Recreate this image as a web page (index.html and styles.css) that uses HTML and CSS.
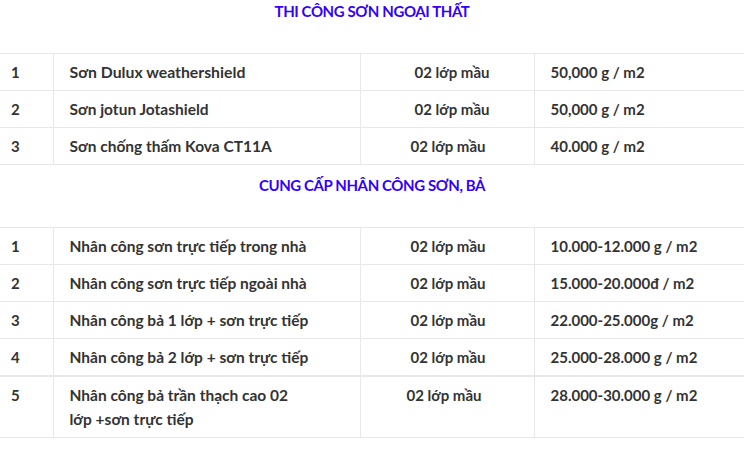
FILE: index.html
```html
<!DOCTYPE html>
<html lang="vi">
<head>
<meta charset="utf-8">
<title>Bảng giá sơn</title>
<link rel="stylesheet" href="styles.css">
</head>
<body>
<table class="price">
  <colgroup>
    <col class="w-no"><col class="w-name"><col class="w-layer"><col class="w-price">
  </colgroup>
  <tbody>
    <tr><td colspan="4" class="head head-first">THI CÔNG SƠN NGOẠI THẤT</td></tr>
    <tr>
      <td class="no">1</td>
      <td class="name big">Sơn Dulux weathershield</td>
      <td class="layer in-a">02 lớp mầu</td>
      <td class="cost">50,000 g / m2</td>
    </tr>
    <tr>
      <td class="no">2</td>
      <td class="name">Sơn jotun Jotashield</td>
      <td class="layer in-a">02 lớp mầu</td>
      <td class="cost">50,000 g / m2</td>
    </tr>
    <tr>
      <td class="no">3</td>
      <td class="name">Sơn chống thấm Kova CT11A</td>
      <td class="layer">02 lớp mầu</td>
      <td class="cost">40.000 g / m2</td>
    </tr>
    <tr><td colspan="4" class="head">CUNG CẤP NHÂN CÔNG SƠN, BẢ</td></tr>
    <tr>
      <td class="no">1</td>
      <td class="name">Nhân công sơn trực tiếp trong nhà</td>
      <td class="layer">02 lớp mầu</td>
      <td class="cost">10.000-12.000 g / m2</td>
    </tr>
    <tr>
      <td class="no">2</td>
      <td class="name">Nhân công sơn trực tiếp ngoài nhà</td>
      <td class="layer">02 lớp mầu</td>
      <td class="cost">15.000-20.000đ / m2</td>
    </tr>
    <tr>
      <td class="no">3</td>
      <td class="name">Nhân công bả 1 lớp + sơn trực tiếp</td>
      <td class="layer">02 lớp mầu</td>
      <td class="cost">22.000-25.000g / m2</td>
    </tr>
    <tr>
      <td class="no">4</td>
      <td class="name">Nhân công bả 2 lớp + sơn trực tiếp</td>
      <td class="layer">02 lớp mầu</td>
      <td class="cost">25.000-28.000 g / m2</td>
    </tr>
    <tr class="last">
      <td class="no">5</td>
      <td class="name narrow">Nhân công bả trần thạch cao 02 lớp +sơn trực tiếp</td>
      <td class="layer in-b">02 lớp mầu</td>
      <td class="cost">28.000-30.000 g / m2</td>
    </tr>
  </tbody>
</table>
</body>
</html>
```

FILE: styles.css
```css
html, body {
  margin: 0;
  padding: 0;
  background: #ffffff;
}

body {
  font-family: "Lato", "Liberation Sans", sans-serif;
  font-weight: 700;
  font-size: 15px;
  color: #333333;
}

.price {
  width: 744px;
  table-layout: fixed;
  border-collapse: collapse;
}

.w-no { width: 53px; }
.w-name { width: 307px; }
.w-layer { width: 174px; }
.w-price { width: 210px; }

.price td {
  border: 1px solid #e8e8e8;
  padding: 6px 0 6px 16px;
  line-height: 24px;
  vertical-align: top;
  text-align: left;
}

.price td:first-child { border-left: none; }
.price td:last-child { border-right: none; }

.price td.no { padding-left: 11px; }

.price td.name {
  font-size: 15.5px;
  padding-right: 8px;
}

.price td.narrow { padding-right: 60px; }

.price td.big { font-size: 15.8px; }

.price td.layer { padding-left: 50px; }
.price td.in-a { padding-left: 54px; }
.price td.in-b { padding-left: 46px; }

.price td.head {
  border-left: none;
  border-right: none;
  text-align: center;
  color: #3300ff;
  font-size: 15px;
  letter-spacing: -0.4px;
  padding: 8px 0 30px;
  line-height: 24px;
}

.price td.head-first {
  border-top: none;
  padding: 0 0 31px;
  line-height: 22px;
}

.price tr.last td { border-top: 2px solid #e8e8e8; }
```
